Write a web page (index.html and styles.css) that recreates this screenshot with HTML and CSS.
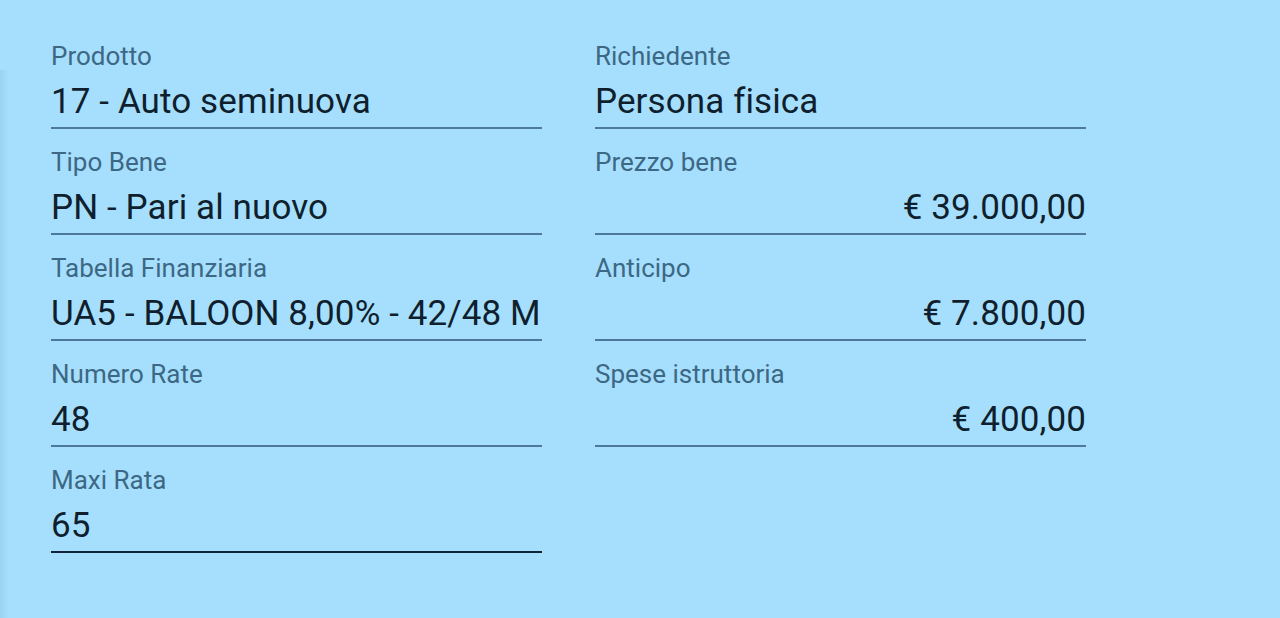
FILE: index.html
```html
<!DOCTYPE html>
<html lang="it">
<head>
<meta charset="utf-8">
<title>Finanziamento</title>
<link rel="stylesheet" href="styles.css">
</head>
<body>
<div class="page">
  <div class="form">
    <div class="col">
      <div class="field"><div class="label">Prodotto</div><div class="value">17 - Auto seminuova</div></div>
      <div class="field"><div class="label">Tipo Bene</div><div class="value">PN - Pari al nuovo</div></div>
      <div class="field"><div class="label">Tabella Finanziaria</div><div class="value">UA5 - BALOON 8,00% - 42/48 M</div></div>
      <div class="field"><div class="label">Numero Rate</div><div class="value">48</div></div>
      <div class="field focused"><div class="label">Maxi Rata</div><div class="value">65</div></div>
    </div>
    <div class="col">
      <div class="field"><div class="label">Richiedente</div><div class="value">Persona fisica</div></div>
      <div class="field"><div class="label">Prezzo bene</div><div class="value num">€ 39.000,00</div></div>
      <div class="field"><div class="label">Anticipo</div><div class="value num">€ 7.800,00</div></div>
      <div class="field"><div class="label">Spese istruttoria</div><div class="value num">€ 400,00</div></div>
    </div>
  </div>
</div>
</body>
</html>
```
FILE: styles.css
```css
html, body {
  margin: 0;
  padding: 0;
  height: 100%;
}
body {
  background: #a6dffd;
  font-family: Roboto, "Liberation Sans", sans-serif;
  overflow: hidden;
}
.page {
  position: relative;
  height: 618px;
}
.page::before {
  content: "";
  position: absolute;
  left: 0;
  top: 70px;
  bottom: 0;
  width: 9px;
  background: linear-gradient(to right, rgba(60, 120, 160, 0.12), rgba(60, 120, 160, 0));
}
.form {
  display: grid;
  grid-template-columns: 491px 491px;
  column-gap: 53px;
  padding: 41px 0 0 51px;
}
.col {
  display: flex;
  flex-direction: column;
  gap: 18px;
}
.field {
  display: flex;
  flex-direction: column;
  border-bottom: 2px solid #4e7898;
  padding-bottom: 5px;
}
.field.focused {
  border-bottom-color: #0f2539;
}
.label {
  font-size: 26px;
  line-height: 30px;
  color: #3d6884;
  height: 30px;
  white-space: nowrap;
}
.value {
  margin-top: 11px;
  font-size: 35px;
  line-height: 40px;
  height: 40px;
  color: #0f1f2d;
  white-space: nowrap;
  letter-spacing: 0.1px;
}
.value.num {
  text-align: right;
}
```
